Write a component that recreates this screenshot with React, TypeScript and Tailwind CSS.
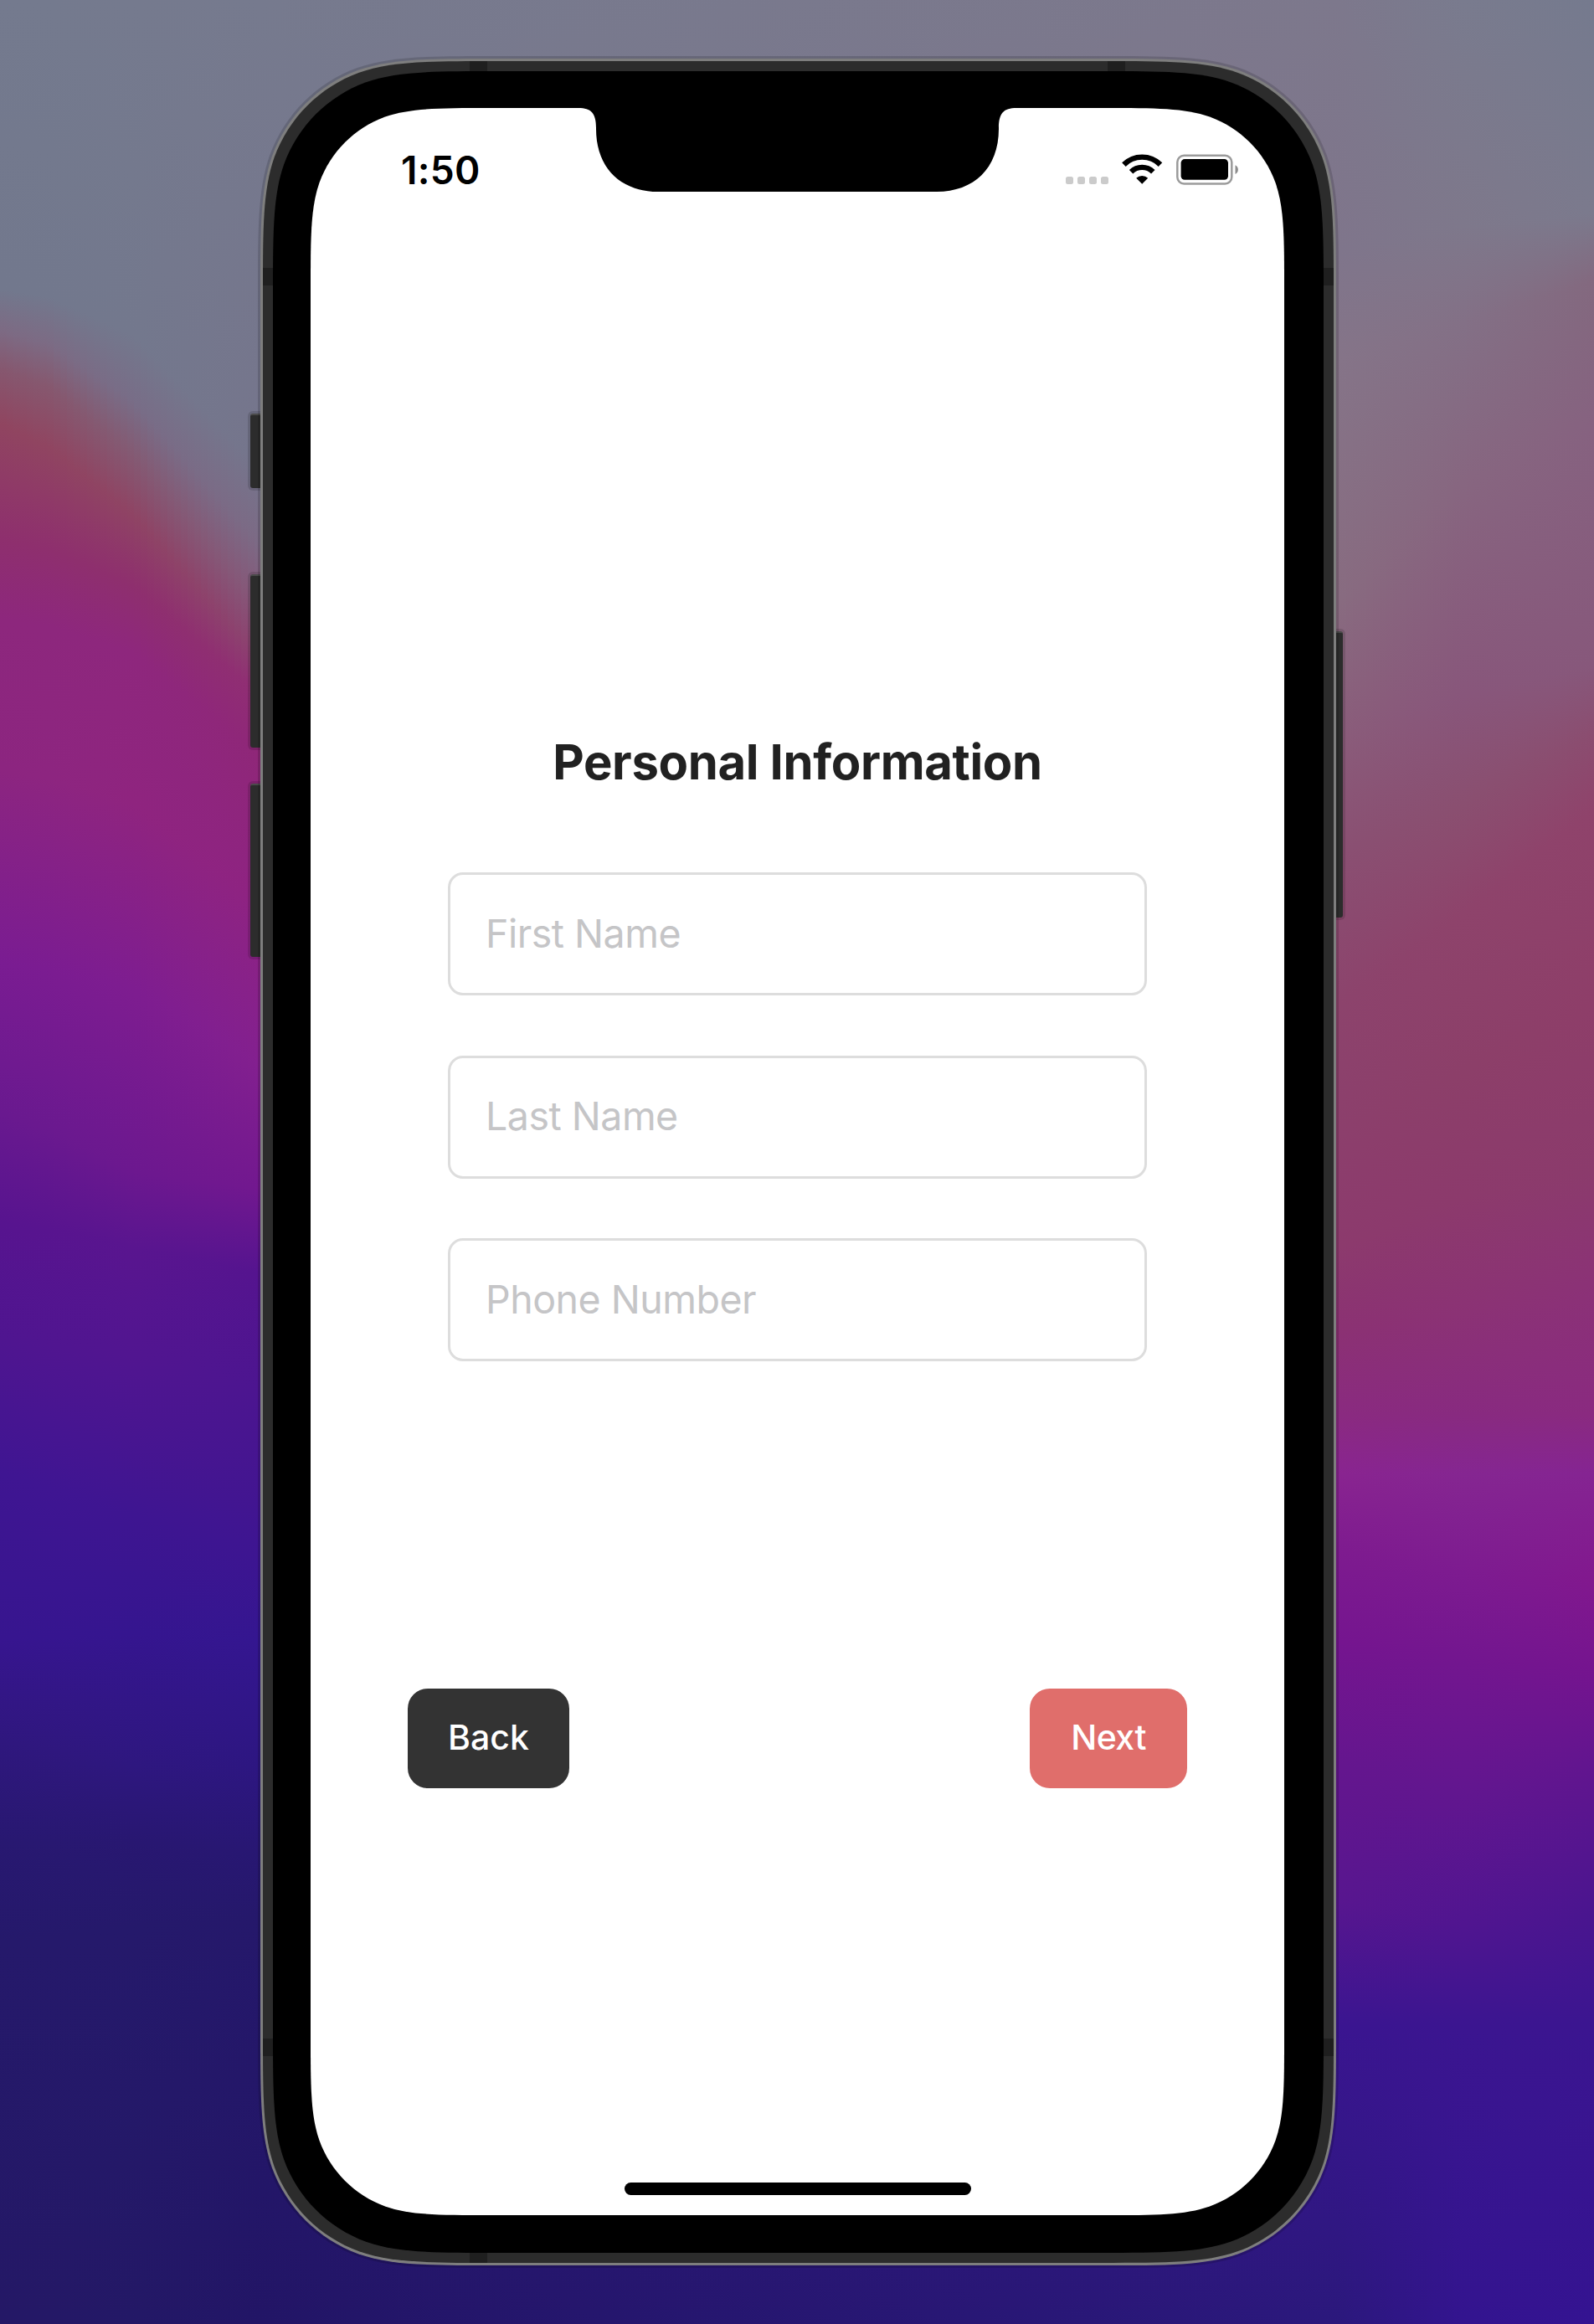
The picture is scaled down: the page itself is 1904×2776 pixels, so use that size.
import type { CSSProperties, ReactNode } from "react";

type Stop = [number, string];

/* Vertical colour profiles of the wallpaper, keyed by horizontal position. */
const profiles: { x: number; stops: Stop[] }[] = [
  {
    x: 0,
    stops: [
      [0, "#747a8e"], [345, "#72788d"], [395, "#7d6a83"], [440, "#86576f"], [505, "#904560"], [645, "#8e2f6e"],
      [740, "#8d277d"], [920, "#8c2580"], [1150, "#7a1c92"], [1330, "#69198f"], [1460, "#57148f"], [1600, "#4f1590"],
      [1760, "#3f1592"], [1960, "#37158f"], [2080, "#2f177e"], [2200, "#281871"], [2320, "#25196b"], [2776, "#241866"],
    ],
  },
  {
    x: 60,
    stops: [
      [0, "#747a8e"], [355, "#72788d"], [412, "#7c6b84"], [462, "#86586f"], [535, "#904561"], [657, "#8e2f6e"],
      [748, "#8d277d"], [930, "#8d2580"], [1158, "#7b1c91"], [1350, "#6a198f"], [1468, "#58148f"], [1606, "#501590"],
      [1778, "#3f1592"], [1956, "#36158f"], [2090, "#2f177e"], [2200, "#281871"], [2314, "#25196b"], [2776, "#241866"],
    ],
  },
  {
    x: 160,
    stops: [
      [0, "#757a8e"], [400, "#73788d"], [480, "#786d87"], [540, "#835b74"], [615, "#8f4464"], [700, "#8e2f6e"],
      [780, "#8e277d"], [960, "#8f247f"], [1180, "#7e1d90"], [1400, "#6c188f"], [1490, "#59158f"], [1620, "#511590"],
      [1810, "#3e1591"], [1950, "#35158f"], [2110, "#2e177f"], [2200, "#281771"], [2300, "#25196b"], [2776, "#231866"],
    ],
  },
  {
    x: 310,
    stops: [
      [0, "#767a8e"], [560, "#75758c"], [650, "#7c6a85"], [725, "#865779"], [785, "#8c4271"], [830, "#902e74"],
      [900, "#8f2778"], [1080, "#8e2382"], [1270, "#83208f"], [1420, "#72188f"], [1520, "#55148f"], [1660, "#4c1590"],
      [1860, "#3d1591"], [1960, "#341690"], [2110, "#2d1681"], [2210, "#281773"], [2290, "#25186b"], [2776, "#221566"],
    ],
  },
  {
    x: 1600,
    stops: [
      [0, "#7d788c"], [300, "#7f758b"], [430, "#857488"], [720, "#886b80"], [880, "#8a5c7a"], [1020, "#8a4f72"],
      [1200, "#8c436c"], [1350, "#8c3f6c"], [1490, "#8c3a6d"], [1590, "#8b3173"], [1690, "#8a2a80"], [1760, "#892490"],
      [1850, "#7e1b8f"], [1960, "#75158f"], [2110, "#64168e"], [2270, "#58168f"], [2420, "#3a1590"], [2776, "#2b187c"],
    ],
  },
  {
    x: 1750,
    stops: [
      [0, "#797b8e"], [270, "#7e788b"], [385, "#837086"], [575, "#876680"], [830, "#88567b"], [960, "#8a4f70"],
      [1090, "#8e436b"], [1280, "#8c3f69"], [1430, "#8c3a6c"], [1570, "#8b3275"], [1690, "#882a80"], [1760, "#852691"],
      [1880, "#7d1b90"], [1980, "#73168f"], [2130, "#63168f"], [2300, "#501590"], [2420, "#3b1590"], [2776, "#33148f"],
    ],
  },
  {
    x: 1904,
    stops: [
      [0, "#757a8e"], [255, "#7b7a8d"], [335, "#83697f"], [510, "#866280"], [795, "#87587b"], [875, "#8b4d70"],
      [965, "#8f436b"], [1200, "#8e3e69"], [1400, "#8b3b6c"], [1530, "#8b3276"], [1690, "#8a2a80"], [1760, "#852492"],
      [1890, "#81188e"], [2000, "#74148f"], [2120, "#60158f"], [2290, "#49158f"], [2420, "#3b1590"], [2776, "#341391"],
    ],
  },
];

const SLICE = 8;

function mixHex(a: string, b: string, t: number) {
  const part = (s: string, i: number) => parseInt(s.slice(i, i + 2), 16);
  const c = [1, 3, 5].map((i) => (part(a, i) + (part(b, i) - part(a, i)) * t).toFixed(1));
  return `rgb(${c.join(",")})`;
}

function sliceGradient(x: number) {
  let k = 0;
  while (k < profiles.length - 2 && profiles[k + 1].x < x) k++;
  const a = profiles[k];
  const b = profiles[k + 1];
  const t = (x - a.x) / (b.x - a.x);
  const stops = a.stops.map(([y, c], i) => {
    const [y2, c2] = b.stops[i];
    return `${mixHex(c, c2, t)} ${(y + (y2 - y) * t).toFixed(1)}px`;
  });
  return `linear-gradient(to bottom, ${stops.join(",")})`;
}

function Wallpaper() {
  const slices = Array.from({ length: 1904 / SLICE }, (_, i) => i * SLICE + SLICE / 2);
  return (
    <div aria-hidden className="absolute inset-0 flex">
      {slices.map((x) => (
        <div key={x} className="h-full w-2 shrink-0" style={{ backgroundImage: sliceGradient(x) }} />
      ))}
    </div>
  );
}

/* Rounded rectangle with continuous-curvature corners. */
function smoothRect(w: number, h: number, r: number): CSSProperties {
  const [a, b, c, d, e, f, g] = [1.528665, 1.088493, 0.845, 0.631494, 0.372824, 0.16906, 0.074911].map((v) => v * r);
  const p = [
    `M${a} 0L${w - a} 0`,
    `C${w - b} 0 ${w - c} 0 ${w - d} ${g}C${w - e} ${f} ${w - f} ${e} ${w - g} ${d}C${w} ${c} ${w} ${b} ${w} ${a}`,
    `L${w} ${h - a}`,
    `C${w} ${h - b} ${w} ${h - c} ${w - g} ${h - d}C${w - f} ${h - e} ${w - e} ${h - f} ${w - d} ${h - g}C${w - c} ${h} ${w - b} ${h} ${w - a} ${h}`,
    `L${a} ${h}`,
    `C${b} ${h} ${c} ${h} ${d} ${h - g}C${e} ${h - f} ${f} ${h - e} ${g} ${h - d}C0 ${h - c} 0 ${h - b} 0 ${h - a}`,
    `L0 ${a}`,
    `C0 ${b} 0 ${c} ${g} ${d}C${f} ${e} ${e} ${f} ${d} ${g}C${c} 0 ${b} 0 ${a} 0Z`,
  ];
  return { clipPath: `path("${p.join("")}")` };
}

function StatusIcons() {
  return (
    <div className="flex items-end">
      <div className="mr-px mb-px flex gap-[5px]">
        {[0, 1, 2, 3].map((i) => (
          <span key={i} className="size-[9px] rounded-[2.5px] bg-[#cbcbcb]" />
        ))}
      </div>
      <svg className="ml-[15px]" width="50" height="38" viewBox="0 0 50 38">
        <g fill="none" stroke="#000" strokeWidth="6.4">
          <path d="M2.4 13.6 A31 31 0 0 1 46 13.6" />
          <path d="M11.1 22.3 A18.6 18.6 0 0 1 37.3 22.3" />
        </g>
        <path d="M24.2 36.8 L17.2 29.8 A10.2 10.2 0 0 1 31.2 29.8 Z" fill="#000" />
      </svg>
      <svg className="ml-[15px]" width="76" height="38" viewBox="0 0 76 38">
        <rect x="1.3" y="2.8" width="65" height="33.6" rx="8" fill="none" stroke="#9b9b9b" strokeWidth="2.5" />
        <rect x="5.6" y="7.1" width="56.4" height="24.6" rx="4.5" fill="#000" />
        <path d="M70.5 14.2 A6 6 0 0 1 70.5 25 Z" fill="#8c8c8c" />
      </svg>
    </div>
  );
}

function Field({ label }: { label: string }) {
  return (
    <input
      placeholder={label}
      className="h-[147px] w-[835px] rounded-[18px] border-[3px] border-[#dddddd] bg-white pb-[2px] pl-[42px] text-[46.5px] tracking-[-0.5px] text-[#212121] placeholder:text-[#c5c5c7] placeholder:opacity-100"
    />
  );
}

function SideButton({ className }: { className: string }) {
  return <div className={`absolute border-t-[2px] border-[#4a4a4a] bg-[#2c2c2c] shadow-[0_0_0_3px_rgba(0,0,0,0.13)] ${className}`} />;
}

function Screen({ children }: { children: ReactNode }) {
  return (
    <div className="relative flex h-[2517px] w-[1163px] flex-col bg-white" style={smoothRect(1163, 2517, 141)}>
      <svg aria-hidden className="absolute top-0 left-[320px]" width="523" height="101" viewBox="0 0 523 101">
        <path
          d="M0 0 H523 C508 0 502 6 502 24 V25 C502 72 472 100 428 100 H95 C51 100 21 72 21 25 V24 C21 6 15 0 0 0 Z"
          fill="#000"
        />
      </svg>
      {children}
    </div>
  );
}

export default function App() {
  return (
    <main className="relative h-[2776px] w-[1904px] overflow-hidden font-['Inter','Liberation_Sans',sans-serif]">
      <Wallpaper />
      <div className="relative ml-[308px] w-[1291px] pt-[67px]">
        <SideButton className="top-[494px] left-[-9px] h-[89px] w-[12px] rounded-l-[3px]" />
        <SideButton className="top-[686px] left-[-9px] h-[207px] w-[12px] rounded-l-[3px]" />
        <SideButton className="top-[936px] left-[-9px] h-[207px] w-[12px] rounded-l-[3px]" />
        <SideButton className="top-[754px] right-[-5px] h-[342px] w-[8px] rounded-r-[3px]" />

        <div className="h-[2642px] w-[1291px] bg-black/15 p-[3px]" style={smoothRect(1291, 2642, 188)}>
          <div className="h-[2636px] w-[1285px] bg-[#7e7e7e] p-[3px]" style={smoothRect(1285, 2636, 185)}>
            <div className="relative h-[2630px] w-[1279px] bg-[#2c2c2c] p-[12px]" style={smoothRect(1279, 2630, 182)}>
              <div className="absolute top-0 left-[247px] h-[12px] w-[21px] bg-[#1f1f1f]" />
              <div className="absolute top-0 left-[1009px] h-[12px] w-[21px] bg-[#1f1f1f]" />
              <div className="absolute bottom-0 left-[247px] h-[12px] w-[21px] bg-[#1f1f1f]" />
              <div className="absolute top-[247px] left-0 h-[21px] w-full bg-[#1f1f1f]" />
              <div className="absolute bottom-[247px] left-0 h-[21px] w-full bg-[#1f1f1f]" />
              <div
                className="relative h-[2606px] w-[1255px] bg-black pt-[44px] pl-[45px]"
                style={smoothRect(1255, 2606, 176)}
              >
                <Screen>
                  <header className="flex h-[92px] items-end justify-between pr-[53px] pl-[108px]">
                    <span className="mb-[-10px] text-[46px] leading-[56px] font-semibold tracking-[0.3px] text-black">1:50</span>
                    <StatusIcons />
                  </header>

                  <h1 className="mt-[654px] text-center text-[58px] leading-[70px] font-bold tracking-[-0.35px] text-[#212121]">
                    Personal Information
                  </h1>

                  <form className="mt-[97px] flex flex-col gap-[71.5px] pl-[164px]">
                    <Field label="First Name" />
                    <Field label="Last Name" />
                    <Field label="Phone Number" />
                  </form>

                  <div className="mt-[391px] flex justify-between pr-[116px] pl-[116px]">
                    <button className="h-[119px] w-[193px] rounded-[24px] bg-[#333333] pb-[2px] text-[41px] font-medium text-white">
                      Back
                    </button>
                    <button className="h-[119px] w-[188px] rounded-[24px] bg-[#e06e6b] pb-[2px] text-[41px] font-medium tracking-[-0.5px] text-white">
                      Next
                    </button>
                  </div>

                  <div className="mt-auto mb-[24px] ml-[375px] h-[15px] w-[414px] rounded-full bg-black" />
                </Screen>
              </div>
            </div>
          </div>
        </div>
      </div>
    </main>
  );
}
